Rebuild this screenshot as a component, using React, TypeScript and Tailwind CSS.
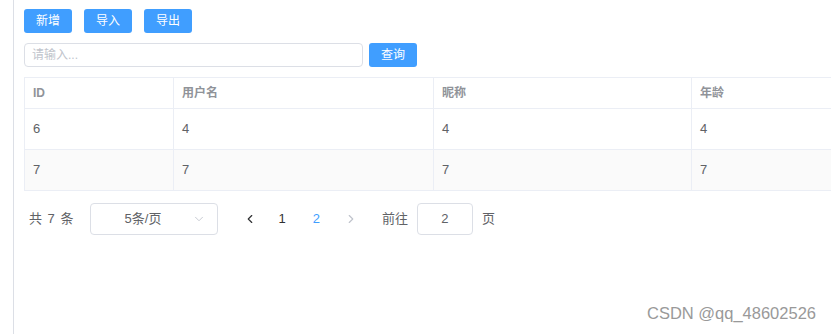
import React from 'react';
import { ChevronDown, ChevronLeft, ChevronRight } from 'lucide-react';

const rows = [
  { id: '6', username: '4', nickname: '4', age: '4' },
  { id: '7', username: '7', nickname: '7', age: '7' },
];

const font = { fontFamily: '"Liberation Sans", "Noto Sans CJK SC", sans-serif' };

const Btn: React.FC<{ label: string; className?: string }> = ({ label, className = '' }) => (
  <button className={`h-6 w-12 rounded-[3px] bg-[#409eff] text-[12px] leading-none text-white ${className}`}>
    {label}
  </button>
);

const cols = 'grid grid-cols-[149px_260px_258px_260px]';

const App: React.FC = () => {
  return (
    <div className="relative h-[334px] w-[831px] overflow-hidden bg-white" style={font}>
      <div className="ml-[13px] h-full border-l border-[#dcdfe6] pl-[10px] pt-[9px]">
        <div className="flex gap-3">
          <Btn label="新增" />
          <Btn label="导入" />
          <Btn label="导出" />
        </div>

        <div className="mt-[10px] flex items-center">
          <input
            placeholder="请输入..."
            className="h-6 w-[339px] rounded-[4px] border border-[#dcdfe6] px-[7px] text-[12px] text-[#606266] outline-none placeholder:text-[#c0c4cc]"
          />
          <Btn label="查询" className="ml-[6px]" />
        </div>

        <div className="mt-[10px] w-[927px] border-l border-t border-[#ebeef5] text-[13px]">
          <div className={`${cols} h-[31px] border-b border-[#ebeef5] font-bold text-[#909399]`}>
            {['ID', '用户名', '昵称', '年龄'].map((h) => (
              <div key={h} className="flex items-center border-r border-[#ebeef5] pl-[8px] text-[12px]">
                {h}
              </div>
            ))}
          </div>
          {rows.map((r, i) => (
            <div
              key={r.id}
              className={`${cols} h-[41px] border-b border-[#ebeef5] text-[#606266] ${i % 2 === 1 ? 'bg-[#fafafa]' : 'bg-white'}`}
            >
              {[r.id, r.username, r.nickname, r.age].map((v, j) => (
                <div key={j} className="flex items-center border-r border-[#ebeef5] pl-[8px]">
                  {v}
                </div>
              ))}
            </div>
          ))}
        </div>

        <div className="mt-[12px] flex h-8 items-center text-[13px] text-[#606266]">
          <span className="ml-[5px] tracking-[1px]">共 7 条</span>
          <div className="ml-[16px] flex h-8 w-[128px] items-center rounded-[4px] border border-[#dcdfe6]">
            <span className="flex-1 pl-[12px] text-center">5条/页</span>
            <ChevronDown className="mr-[11px] ml-[10px] h-[14px] w-[14px] text-[#c0c4cc]" strokeWidth={1.5} />
          </div>
          <ChevronLeft className="ml-[25px] h-[14px] w-[14px] text-[#303133]" strokeWidth={2} />
          <span className="ml-[21px] text-[#303133]">1</span>
          <span className="ml-[27px] text-[#409eff]">2</span>
          <ChevronRight className="ml-[24px] h-[14px] w-[14px] text-[#c0c4cc]" strokeWidth={2} />
          <span className="ml-[24px]">前往</span>
          <div className="ml-[9px] flex h-8 w-[56px] items-center justify-center rounded-[4px] border border-[#dcdfe6]">
            2
          </div>
          <span className="ml-[9px]">页</span>
        </div>
      </div>

      <div className="absolute right-[15px] bottom-[8px] text-[16.5px] text-[#999]">CSDN @qq_48602526</div>
    </div>
  );
};

export default App;
